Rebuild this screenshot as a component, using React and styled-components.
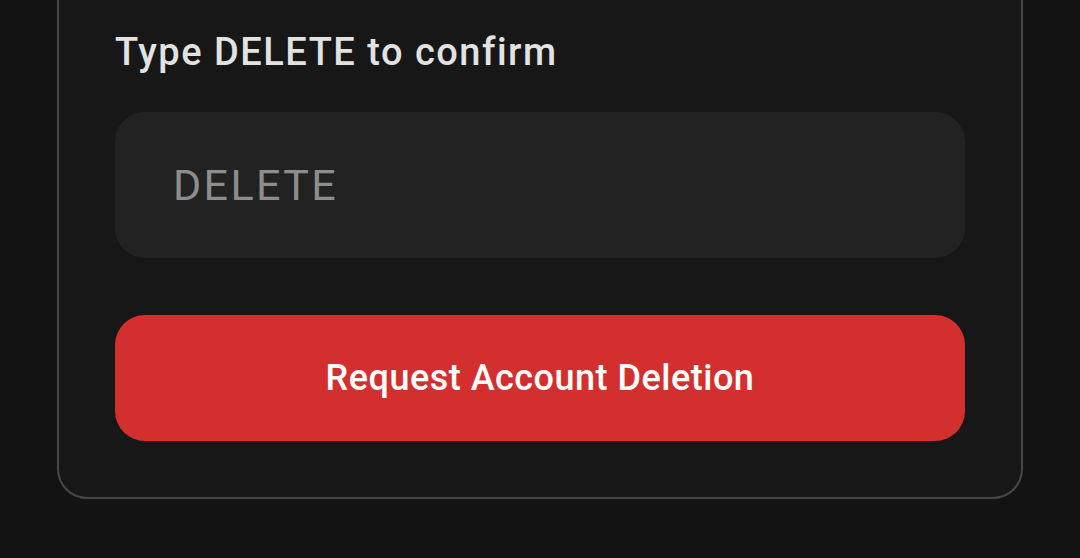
import React, { useState } from 'react'
import styled, { createGlobalStyle } from 'styled-components'

const GlobalStyle = createGlobalStyle`
	html, body {
		margin: 0;
		padding: 0;
		background: #131313;
		font-family: Roboto, 'Noto Sans', sans-serif;
	}
	* {
		box-sizing: border-box;
	}
`

const Page = styled.div`
	width: 1080px;
	height: 558px;
	padding: 0 57px;
	background: #131313;
	overflow: hidden;
`

const Card = styled.div`
	display: flex;
	flex-direction: column;
	padding: 30px 56px 56px;
	background: #171717;
	border: 2px solid #474747;
	border-top: none;
	border-radius: 0 0 30px 30px;
`

const Label = styled.label`
	font-size: 38px;
	line-height: 44px;
	font-weight: 500;
	letter-spacing: 1.5px;
	color: #e2e2e2;
`

const Input = styled.input`
	margin-top: 38px;
	height: 146px;
	width: 100%;
	padding: 0 58px;
	border: none;
	border-radius: 30px;
	background: #222222;
	color: #e2e2e2;
	font-family: Roboto, sans-serif;
	font-size: 43px;
	letter-spacing: 2.4px;
	outline: none;
	&::placeholder {
		color: #8d8d8d;
	}
`

const DangerButton = styled.button`
	margin-top: 57px;
	height: 126px;
	width: 100%;
	border: none;
	border-radius: 30px;
	background: #d32f2f;
	color: #ffffff;
	font-family: Roboto, sans-serif;
	font-size: 36px;
	font-weight: 500;
	letter-spacing: 0.5px;
	cursor: pointer;
`

export default function App() {
	const [value, setValue] = useState('')

	return (
		<>
			<GlobalStyle />
			<Page>
				<Card>
					<Label htmlFor="confirm">Type DELETE to confirm</Label>
					<Input id="confirm" placeholder="DELETE" value={value} onChange={(e) => setValue(e.target.value)} />
					<DangerButton>Request Account Deletion</DangerButton>
				</Card>
			</Page>
		</>
	)
}
